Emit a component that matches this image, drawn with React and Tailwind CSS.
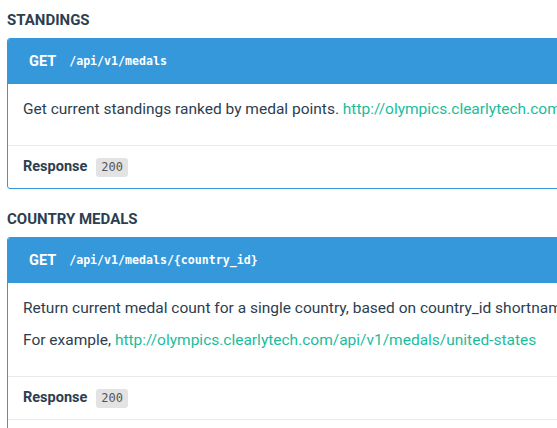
import React from "react";

const mono = "font-['DejaVu_Sans_Mono','Liberation_Mono',monospace]";

function Badge({ children }) {
  return (
    <span className={`${mono} ml-[9px] inline-flex h-[19px] items-center rounded-[3px] bg-[#e3e3e3] px-[5px] text-[12px] text-[#555]`}>
      {children}
    </span>
  );
}

function Card({ path, children, extraRow }) {
  return (
    <div className="w-[860px] overflow-hidden rounded-[3px] border border-[#3498db]">
      <div className="flex h-[45px] items-center bg-[#3498db] pl-[21px] text-white">
        <span className="text-[14.5px] font-bold">GET</span>
        <span className={`${mono} ml-[13px] text-[11.6px] font-bold`}>{path}</span>
      </div>
      <div className="px-[15px] pt-[15px] pb-[14px] text-[15.5px] leading-[20px] text-[#2c3e50]">
        {children}
      </div>
      <div className="flex h-[43px] items-center border-t border-[#eaeaea] px-[15px]">
        <span className="text-[14.5px] font-bold text-[#2c3e50]">Response</span>
        <Badge>200</Badge>
      </div>
      {extraRow && <div className="h-[20px] border-t border-[#eaeaea]" />}
    </div>
  );
}

export default function App() {
  return (
    <div className="h-[428px] w-[557px] overflow-hidden bg-white font-['Roboto','Liberation_Sans',sans-serif]">
      <div className="pl-[7px] pt-[10px]">
        <h2 className="mb-[8px] text-[15px] font-bold leading-[20px] text-[#2c3e50]">STANDINGS</h2>
        <Card path="/api/v1/medals">
          <p className="mb-[12px] whitespace-nowrap">
            Get current standings ranked by medal points.{" "}
            <a className="text-[#1abc9c]">http://olympics.clearlytech.com/api/v1/medals</a>
          </p>
        </Card>
        <h2 className="mt-[20px] mb-[8px] text-[15px] font-bold leading-[20px] text-[#2c3e50]">COUNTRY MEDALS</h2>
        <Card path="/api/v1/medals/{country_id}" extraRow>
          <p className="mb-[12px] whitespace-nowrap">
            Return current medal count for a single country, based on country_id shortname.
          </p>
          <p className="mb-[12px] whitespace-nowrap">
            For example,{" "}
            <a className="text-[#1abc9c]">http://olympics.clearlytech.com/api/v1/medals/united-states</a>
          </p>
        </Card>
      </div>
    </div>
  );
}
